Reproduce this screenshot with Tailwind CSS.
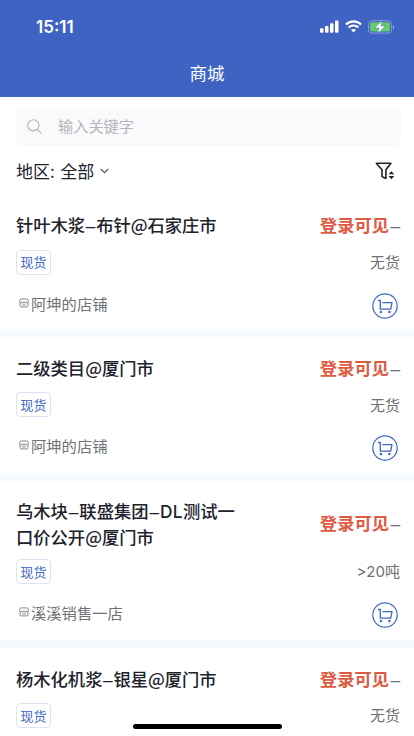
<!DOCTYPE html>
<html lang="zh-CN">
<head>
<meta charset="utf-8">
<title>商城</title>
<script src="https://cdn.jsdelivr.net/npm/@tailwindcss/browser@4"></script>
</head>
<body class="h-[736px] w-[414px] overflow-hidden bg-white font-['Noto_Sans_CJK_SC',sans-serif] text-[#20212b]">
<svg class="hidden">
  <symbol id="cart" viewBox="0 0 26 26">
    <circle cx="13" cy="13" r="12.2" stroke-width="1.2"/>
    <path d="M6 7.5h2.3v8.7h10.4L20 9.6H10.4" stroke-width="1.3" stroke-linejoin="round"/>
    <circle cx="8.9" cy="19" r="1.25" fill="#4166c3" stroke="none"/>
    <circle cx="17.4" cy="19" r="1.25" fill="#4166c3" stroke="none"/>
  </symbol>
  <symbol id="shop" viewBox="0 0 10 10">
    <path d="M1.9.9h6.2q.6 0 .8.6l.6 2.3c0 1.6-2.2 1.6-2.3 0 0 1.6-2.2 1.6-2.2 0 0 1.6-2.2 1.6-2.2 0-.1 1.6-2.3 1.6-2.3 0l.6-2.3q.2-.6.8-.6zM1 4.8v3.1q0 1 1 1h6q1 0 1-1V4.8M3.2 6.9h3.6" stroke-width=".9"/>
  </symbol>
</svg>
<header class="h-[97px] bg-[#3e63c2] text-white">
  <div class="flex h-[50px] items-center justify-between pt-[3px] pr-[19px] pl-[36px]">
    <span class="font-['Inter','Liberation_Sans',sans-serif] text-[17px] leading-[20px] font-semibold">15:11</span>
    <div class="flex items-center gap-[6px]">
      <svg class="h-[13px] w-[19px]" viewBox="0 0 19 13" fill="white"><rect x="0" y="8.2" width="3.5" height="4.5" rx="1"/><rect x="5" y="6" width="3.5" height="6.7" rx="1"/><rect x="10" y="3.3" width="3.5" height="9.4" rx="1"/><rect x="15" y=".4" width="3.5" height="12.3" rx="1"/></svg>
      <svg class="h-[13px] w-[17px]" viewBox="0 0 17 13" fill="none" stroke="white" stroke-width="2.2"><path d="M.9 4.5C5.2.2 11.8.2 16.1 4.5M3.6 7.5c2.8-2.7 7-2.7 9.8 0"/><path d="M5.9 9.8c1.5-1.2 3.7-1.2 5.2 0L8.5 12.5z" fill="white" stroke="none"/></svg>
      <svg class="h-[14px] w-[27px]" viewBox="0 0 27 14" fill="none"><rect x=".6" y=".7" width="23" height="12.4" rx="3.6" stroke="#8b9fd9"/><rect x="2.2" y="2.3" width="19.8" height="9.2" rx="2" fill="#65ce67"/><path d="M25 5v4q1.3-.7 1.3-2T25 5z" fill="#9eafe0"/><path d="M14.4.3 6.6 8h4.4L9.6 13.8l7.8-7.9h-4.4z" fill="white" stroke="#3e63c2" stroke-width=".5"/></svg>
    </div>
  </div>
  <h1 class="pt-[10px] text-center text-[17.5px] leading-[26px] font-normal">商城</h1>
</header>
<section class="h-[97px] px-[16px] pt-[11px]">
  <div class="-mr-[2.5px] flex h-[38px] items-center rounded-[6px] bg-[#f8fafc] pl-[11px] text-[#b4b5b8]">
    <svg class="-mt-[2px] h-[15px] w-[15px]" viewBox="0 0 15 15" fill="none" stroke="#b4b5b8" stroke-width="1.1"><circle cx="6.3" cy="6.3" r="5.6"/><path d="m10.3 10.3 4 4"/></svg>
    <span class="-mt-[4px] pl-[16px] text-[15.2px] leading-[22px]">输入关键字</span>
  </div>
  <div class="flex h-[50px] items-center justify-between pr-[3px]">
    <div class="flex items-center text-[17px] leading-[24px]"><span>地区:</span><span class="ml-[5.5px]">全部</span><svg class="ml-[6px] h-[6px] w-[9px]" viewBox="0 0 9 6" fill="none" stroke="#4b4c53" stroke-width="1.1"><path d="m.6.8 3.9 3.9L8.4.8"/></svg></div>
    <svg class="h-[18px] w-[20px]" viewBox="0 0 20 18" fill="none" stroke="#20212b" stroke-width="1.6" stroke-linejoin="round"><path d="M1.3 1.3h14.6L10.9 7.8v8.6L7 14.6V7.8z"/><path d="m16.4 9.2 2.9 3.1h-5.8zM16.4 17.2l2.9-3.1h-5.8z" fill="#20212b" stroke="none"/></svg>
  </div>
</section>
<main>
  <article class="h-[143.3px] border-b-[8px] border-[#f7fafc] pr-[14px] pl-[16px] pt-[18.5px]">
    <div class="flex items-center justify-between text-[17.3px] leading-[24.5px] font-medium"><h2>针叶木浆<span class="inline-block w-[11px] text-center font-['Liberation_Sans',sans-serif]">–</span>布针@石家庄市</h2><p class="font-bold text-[#de5a41]">登录可见<span class="inline-block w-[11px] text-right font-['Liberation_Sans',sans-serif] font-normal text-[#707176]">–</span></p></div>
    <div class="mt-[11.5px] flex h-[25px] items-center justify-between"><span class="flex h-[25px] w-[35px] items-center justify-center rounded-[4px] border border-[#dce4f4] text-[12.9px] text-[#4166c3]">现货</span><span class="text-[15px] text-[#707176]">无货</span></div>
    <div class="mt-[17px] flex h-[28px] items-center justify-between pr-[2.5px]"><div class="-mt-[6px] flex items-center pl-[3px] text-[15.3px] leading-[22px] text-[#707176]"><svg class="mr-[2px] h-[10px] w-[10px]" fill="none" stroke="#7c7d82"><use href="#shop"/></svg>阿坤的店铺</div><svg class="h-[26px] w-[26px]" fill="none" stroke="#4166c3"><use href="#cart"/></svg></div>
  </article>
  <article class="h-[143.3px] border-b-[8px] border-[#f7fafc] pr-[14px] pl-[16px] pt-[18.5px]">
    <div class="flex items-center justify-between text-[17.3px] leading-[24.5px] font-medium"><h2>二级类目@厦门市</h2><p class="font-bold text-[#de5a41]">登录可见<span class="inline-block w-[11px] text-right font-['Liberation_Sans',sans-serif] font-normal text-[#707176]">–</span></p></div>
    <div class="mt-[11px] flex h-[25px] items-center justify-between"><span class="flex h-[25px] w-[35px] items-center justify-center rounded-[4px] border border-[#dce4f4] text-[12.9px] text-[#4166c3]">现货</span><span class="text-[15px] text-[#707176]">无货</span></div>
    <div class="mt-[17px] flex h-[28px] items-center justify-between pr-[2.5px]"><div class="-mt-[6px] flex items-center pl-[3px] text-[15.3px] leading-[22px] text-[#707176]"><svg class="mr-[2px] h-[10px] w-[10px]" fill="none" stroke="#7c7d82"><use href="#shop"/></svg>阿坤的店铺</div><svg class="h-[26px] w-[26px]" fill="none" stroke="#4166c3"><use href="#cart"/></svg></div>
  </article>
  <article class="h-[167.8px] border-b-[8px] border-[#f7fafc] pr-[14px] pl-[16px] pt-[18.5px]">
    <div class="flex items-center justify-between text-[17.3px] leading-[24.5px] font-medium"><h2>乌木块<span class="inline-block w-[11.5px] text-center font-['Liberation_Sans',sans-serif]">–</span>联盛集团<span class="inline-block w-[11.5px] text-center font-['Liberation_Sans',sans-serif]">–</span><span class="font-['Inter','Liberation_Sans',sans-serif] tracking-[.4px]">DL</span>测试一<br>口价公开@厦门市</h2><p class="font-bold text-[#de5a41]">登录可见<span class="inline-block w-[11px] text-right font-['Liberation_Sans',sans-serif] font-normal text-[#707176]">–</span></p></div>
    <div class="mt-[10.2px] flex h-[25px] items-center justify-between"><span class="flex h-[25px] w-[35px] items-center justify-center rounded-[4px] border border-[#dce4f4] text-[12.9px] text-[#4166c3]">现货</span><span class="text-[15px] text-[#707176]"><span class="font-['Inter','Liberation_Sans',sans-serif]">&gt;20</span>吨</span></div>
    <div class="mt-[17px] flex h-[28px] items-center justify-between pr-[2.5px]"><div class="-mt-[6px] flex items-center pl-[3px] text-[15.3px] leading-[22px] text-[#707176]"><svg class="mr-[2px] h-[10px] w-[10px]" fill="none" stroke="#7c7d82"><use href="#shop"/></svg>溪溪销售一店</div><svg class="h-[26px] w-[26px]" fill="none" stroke="#4166c3"><use href="#cart"/></svg></div>
  </article>
  <article class="pr-[14px] pl-[16px] pt-[18.5px]">
    <div class="flex items-center justify-between text-[17.3px] leading-[24.5px] font-medium"><h2>杨木化机浆<span class="inline-block w-[11px] text-center font-['Liberation_Sans',sans-serif]">–</span>银星@厦门市</h2><p class="font-bold text-[#de5a41]">登录可见<span class="inline-block w-[11px] text-right font-['Liberation_Sans',sans-serif] font-normal text-[#707176]">–</span></p></div>
    <div class="mt-[10.7px] flex h-[25px] items-center justify-between"><span class="flex h-[25px] w-[35px] items-center justify-center rounded-[4px] border border-[#dce4f4] text-[12.9px] text-[#4166c3]">现货</span><span class="text-[15px] text-[#707176]">无货</span></div>
  </article>
</main>
<div class="absolute top-[724px] left-[133px] h-[4.5px] w-[149px] rounded-full bg-black"></div>
</body>
</html>
